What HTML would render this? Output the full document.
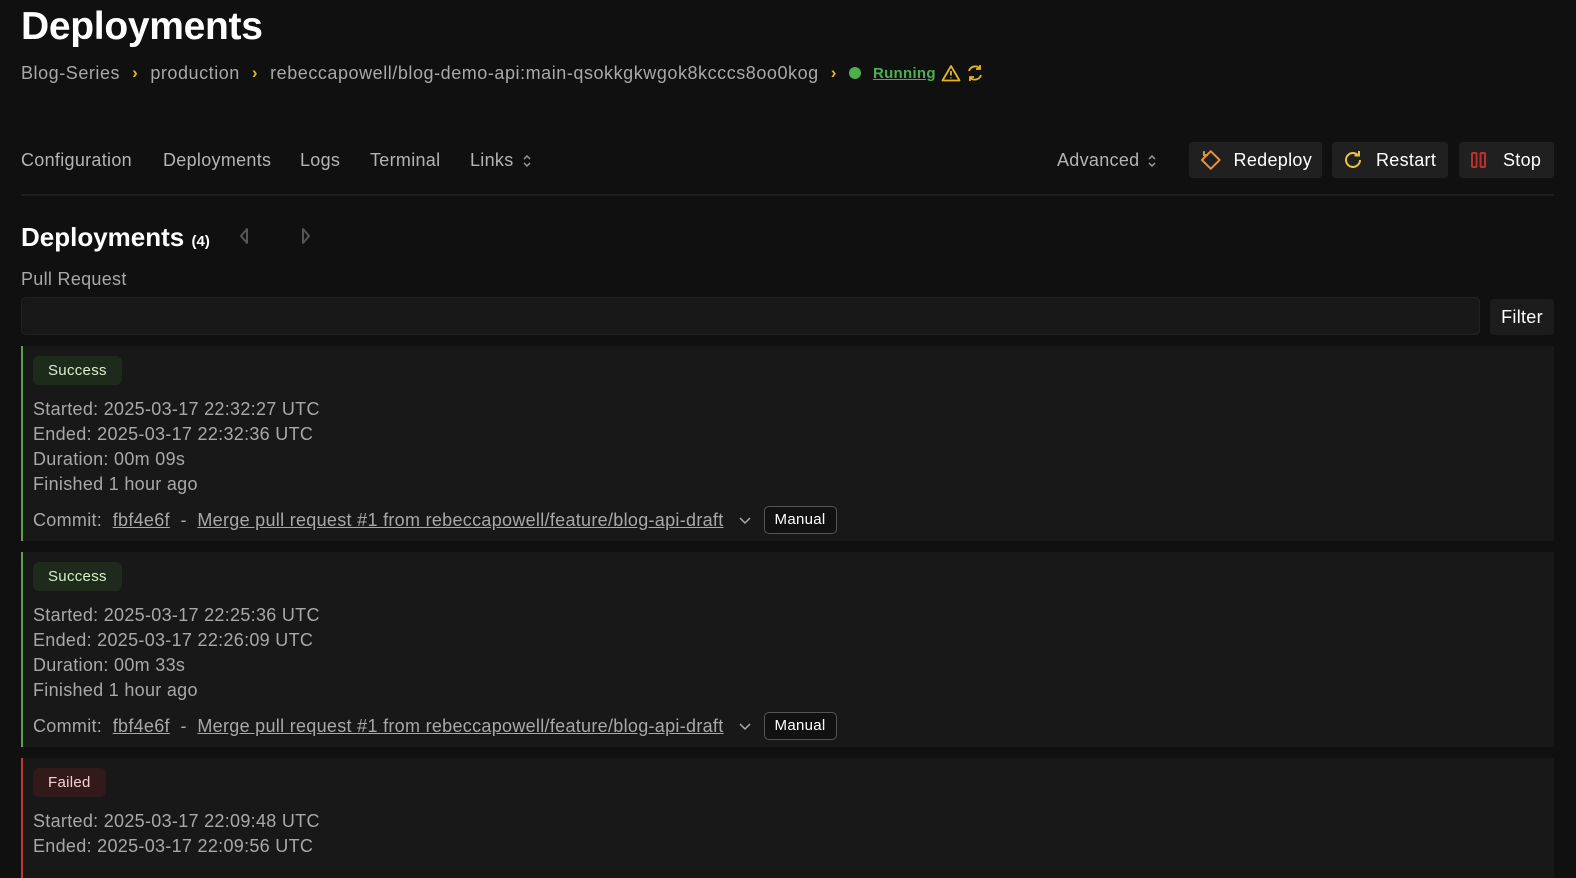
<!DOCTYPE html>
<html><head><meta charset="utf-8"><style>
*{box-sizing:border-box;margin:0;padding:0}
body{width:1576px;height:856px;overflow:hidden;background:#101010;font-family:"Liberation Sans",sans-serif;color:#a8a8a8;position:relative;letter-spacing:0.3px}
.abs{position:absolute}
h1{position:absolute;left:21px;top:5px;font-size:39px;font-weight:bold;color:#fff;letter-spacing:-0.3px}
.bc{left:21px;top:61px;font-size:18px;color:#a8a8a8;display:flex;align-items:center;height:24px;white-space:nowrap;letter-spacing:0.55px}
.chev{color:#e6b422;margin:0 12px;font-size:17px;font-weight:bold}
.nav{top:150px;font-size:18px;color:#b4b4b4}
.btn{position:absolute;top:142px;height:36px;background:#202020;border-radius:4px;color:#fff;font-size:18px;display:flex;align-items:center;padding:0 10px}
.card{position:absolute;left:21px;width:1533px;background:#181818;border-left:2px solid #5da14a;padding:10px 10px}
.card.f{border-left-color:#c0392b}
.badge{display:inline-block;height:29px;line-height:29px;padding:0 15px;border-radius:6px;background:#1e2a1c;color:#d6f0c8;font-size:15px}
.f .badge{background:#321a1a;color:#f4d0d0}
.lines{margin-top:12px;font-size:18px;line-height:25px;color:#a8a8a8}
.commit{margin-top:9px;font-size:18px;display:flex;align-items:center;white-space:nowrap}
.commit u{color:#a8a8a8}
.man{border:1px solid #555;border-radius:5px;color:#fff;font-size:15px;padding:0 10px;height:28px;line-height:26px;margin-left:12px;background:#111}
.ud{display:inline-block;vertical-align:middle;margin-left:8px}
</style></head><body>
<h1>Deployments</h1>
<div class="abs bc">Blog-Series<span class="chev">›</span>production<span class="chev">›</span>rebeccapowell/blog-demo-api:main-qsokkgkwgok8kcccs8oo0kog<span class="chev">›</span><span style="width:12px;height:12px;border-radius:50%;background:#4caf50;display:inline-block;margin-right:12px"></span><u style="color:#4caf50;font-weight:bold;font-size:15px;letter-spacing:0.3px">Running</u>
<svg width="20" height="18" viewBox="0 0 20 18" style="margin-left:5px"><path d="M10 2 L18.5 16.5 H1.5 Z" fill="none" stroke="#e6b422" stroke-width="1.8" stroke-linejoin="round"/><path d="M10 7v4.5M10 13.5v.8" stroke="#e6b422" stroke-width="1.8"/></svg>
<svg width="20" height="20" viewBox="0 0 20 20" style="margin-left:4px"><path d="M4 8a6.5 6.5 0 0 1 11-2.5M16 12a6.5 6.5 0 0 1-11 2.5" fill="none" stroke="#e6b422" stroke-width="1.8"/><path d="M15 2v4h-4M5 18v-4h4" fill="none" stroke="#e6b422" stroke-width="1.8"/></svg></div>

<div class="abs nav" style="left:21px">Configuration</div>
<div class="abs nav" style="left:163px">Deployments</div>
<div class="abs nav" style="left:300px">Logs</div>
<div class="abs nav" style="left:370px">Terminal</div>
<div class="abs nav" style="left:470px">Links<svg class="ud" width="10" height="16" viewBox="0 0 10 16"><path d="M2 6l3-3 3 3M2 10l3 3 3-3" fill="none" stroke="#999" stroke-width="1.5"/></svg></div>
<div class="abs nav" style="left:1057px">Advanced<svg class="ud" width="10" height="16" viewBox="0 0 10 16"><path d="M2 6l3-3 3 3M2 10l3 3 3-3" fill="none" stroke="#999" stroke-width="1.5"/></svg></div>
<div class="btn" style="left:1189px;width:133px"><svg width="24" height="24" viewBox="0 0 24 24" style="margin-right:11px"><path d="M12 3 L21 12 L12 21 L3 12 Z" fill="none" stroke="#e8913a" stroke-width="2" stroke-linejoin="round"/><path d="M5 3v4h4" fill="none" stroke="#e8913a" stroke-width="2"/></svg>Redeploy</div>
<div class="btn" style="left:1332px;width:116px"><svg width="22" height="22" viewBox="0 0 22 22" style="margin-right:12px"><path d="M18 11a7 7 0 1 1-2.5-5.4" fill="none" stroke="#e6c43a" stroke-width="2"/><path d="M17 2v4.5h-4.5" fill="none" stroke="#e6c43a" stroke-width="2"/></svg>Restart</div>
<div class="btn" style="left:1459px;width:95px"><svg width="20" height="20" viewBox="0 0 20 20" style="margin-right:14px"><rect x="3" y="3" width="4.5" height="14" rx="1" fill="none" stroke="#c0302b" stroke-width="2"/><rect x="11.5" y="3" width="4.5" height="14" rx="1" fill="none" stroke="#c0302b" stroke-width="2"/></svg>Stop</div>
<div class="abs" style="left:21px;top:194px;width:1533px;height:2px;background:#1e1e1e"></div>

<div class="abs" style="left:21px;top:222px;font-size:26px;font-weight:bold;color:#fff;letter-spacing:0">Deployments <span style="font-size:15px">(4)</span></div>
<svg class="abs" style="left:238px;top:227px" width="12" height="18" viewBox="0 0 12 18"><path d="M9 2 L3 9 L9 16 Z" fill="none" stroke="#555" stroke-width="2" stroke-linejoin="round"/></svg>
<svg class="abs" style="left:300px;top:227px" width="12" height="18" viewBox="0 0 12 18"><path d="M3 2 L9 9 L3 16 Z" fill="none" stroke="#555" stroke-width="2" stroke-linejoin="round"/></svg>
<div class="abs" style="left:21px;top:269px;font-size:18px;color:#a8a8a8">Pull Request</div>
<div class="abs" style="left:21px;top:297px;width:1459px;height:38px;background:#181818;border:1px solid #222;border-radius:5px"></div>
<div class="abs" style="left:1490px;top:299px;width:64px;height:36px;background:#1c1c1c;border-radius:4px;color:#fff;font-size:18px;text-align:center;line-height:36px">Filter</div>

<div class="card" style="top:346px;height:195px"><span class="badge">Success</span>
<div class="lines">Started: 2025-03-17 22:32:27 UTC<br>Ended: 2025-03-17 22:32:36 UTC<br>Duration: 00m 09s<br>Finished 1 hour ago</div>
<div class="commit">Commit:&nbsp;&nbsp;<u>fbf4e6f</u>&nbsp;&nbsp;-&nbsp;&nbsp;<u>Merge pull request #1 from rebeccapowell/feature/blog-api-draft</u><svg style="margin-left:14px" width="14" height="10" viewBox="0 0 14 10"><path d="M2 3l5 5 5-5" fill="none" stroke="#aaa" stroke-width="1.5"/></svg><span class="man">Manual</span></div></div>

<div class="card" style="top:552px;height:195px"><span class="badge">Success</span>
<div class="lines">Started: 2025-03-17 22:25:36 UTC<br>Ended: 2025-03-17 22:26:09 UTC<br>Duration: 00m 33s<br>Finished 1 hour ago</div>
<div class="commit">Commit:&nbsp;&nbsp;<u>fbf4e6f</u>&nbsp;&nbsp;-&nbsp;&nbsp;<u>Merge pull request #1 from rebeccapowell/feature/blog-api-draft</u><svg style="margin-left:14px" width="14" height="10" viewBox="0 0 14 10"><path d="M2 3l5 5 5-5" fill="none" stroke="#aaa" stroke-width="1.5"/></svg><span class="man">Manual</span></div></div>

<div class="card f" style="top:758px;height:120px"><span class="badge">Failed</span>
<div class="lines">Started: 2025-03-17 22:09:48 UTC<br>Ended: 2025-03-17 22:09:56 UTC</div></div>
</body></html>
